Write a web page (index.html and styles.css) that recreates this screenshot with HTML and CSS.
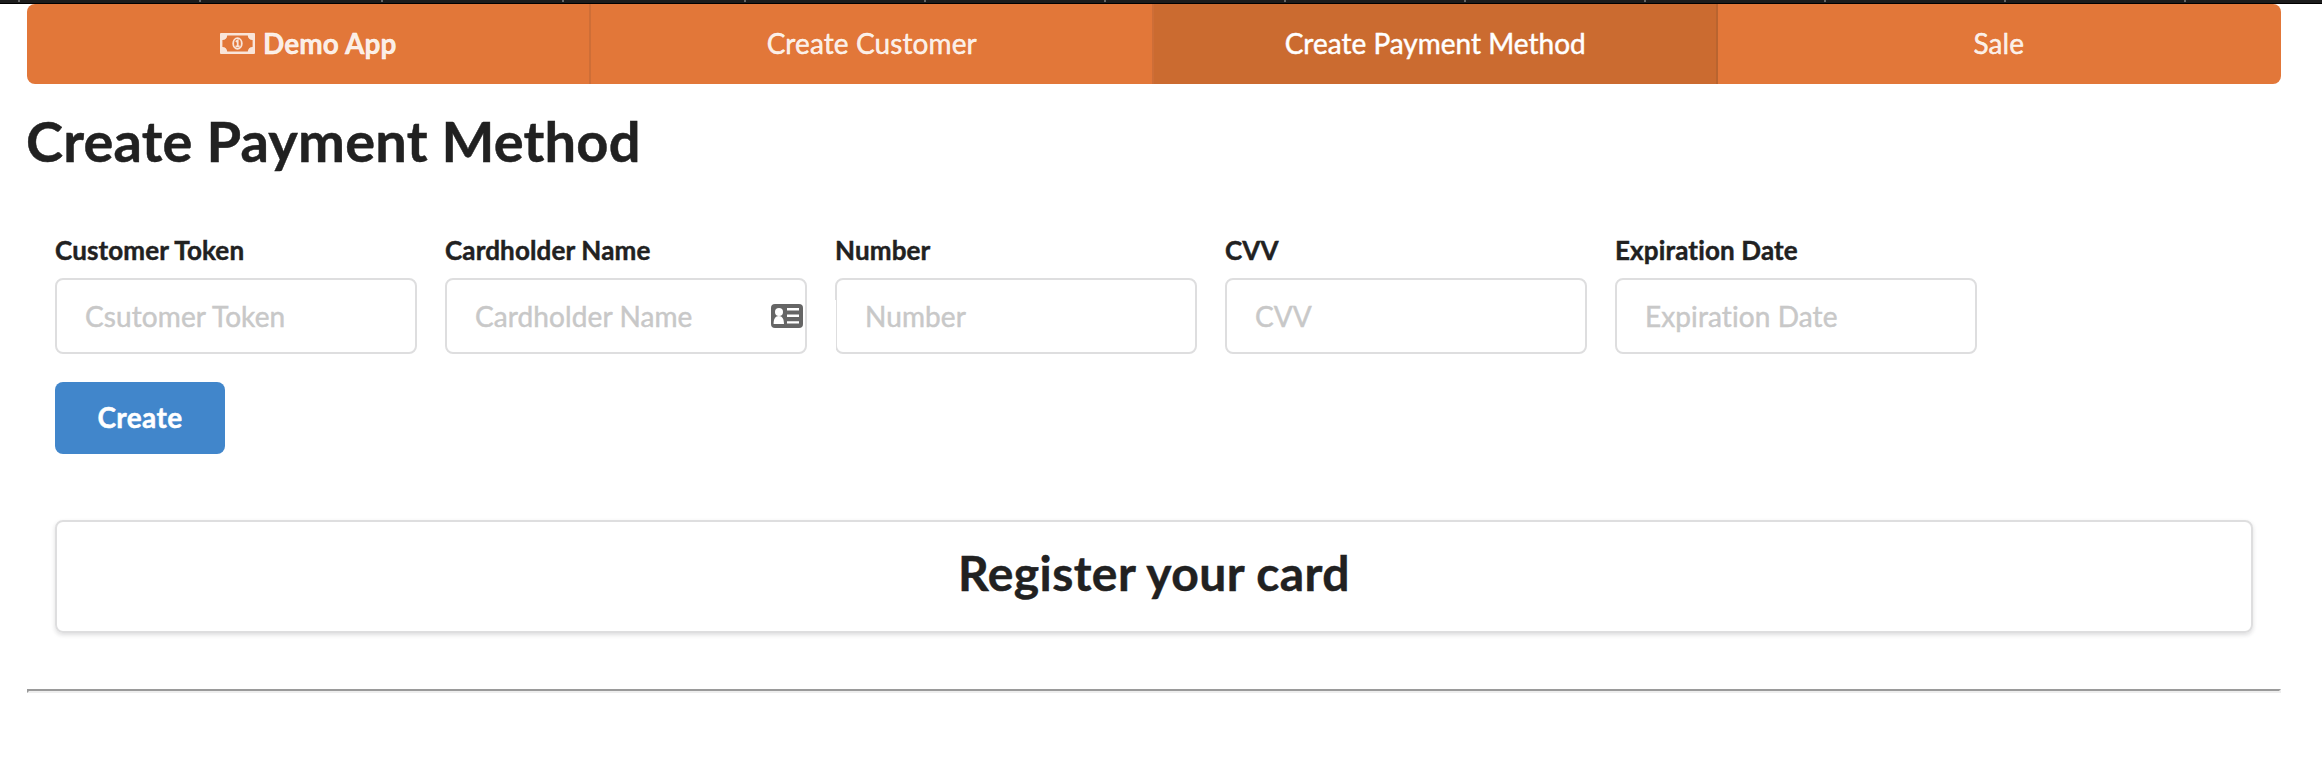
FILE: index.html
```html
<!DOCTYPE html>
<html lang="en">
<head>
<meta charset="utf-8">
<title>Demo App</title>
<link rel="stylesheet" href="styles.css">
</head>
<body>
<div class="window-edge"></div>
<div class="container">
  <nav class="menu">
    <a class="item brand">
      <svg class="money" viewBox="0 0 35 21" fill="none" stroke="currentColor">
        <path fill="currentColor" stroke="none" fill-rule="evenodd" d="M1 0h33a1 1 0 0 1 1 1v19a1 1 0 0 1-1 1H1a1 1 0 0 1-1-1V1a1 1 0 0 1 1-1zM7.200 2.400A5 5 0 0 1 2.400 7v7A5 5 0 0 1 7.200 18.600h20.600a5 5 0 0 1 4.800-4.600V7A5 5 0 0 1 27.800 2.400z"/>
        <ellipse cx="17.500" cy="10.500" rx="4.300" ry="5.300" stroke-width="1.800"/>
        <path stroke-width="1.800" d="M15.700 8.700l2-1.300v6M15.500 13.300h4.200"/>
      </svg>
      <span>Demo App</span>
    </a>
    <a class="item">Create Customer</a>
    <a class="item active">Create Payment Method</a>
    <a class="item">Sale</a>
  </nav>
  <h1 class="title">Create Payment Method</h1>
  <form class="form">
    <div class="fields">
      <div class="field"><label class="label" for="token">Customer Token</label><input class="input" id="token" placeholder="Csutomer Token"></div>
      <div class="field"><label class="label" for="holder">Cardholder Name</label><input class="input" id="holder" placeholder="Cardholder Name">
        <svg class="contact" viewBox="0 0 32 24"><rect width="32" height="24" rx="4" fill="#656565"/><g fill="#fff"><circle cx="8" cy="8" r="4"/><path d="M2.600 20c0-5 1.600-8 5.200-8s5.200 3 5.200 8zM16 4h12v2.400H16zM16 10.600h12V13H16zM16 17.200h12v2.400H16z"/></g></svg>
      </div>
      <div class="field clipped"><label class="label" for="number">Number</label><input class="input" id="number" placeholder="Number"></div>
      <div class="field"><label class="label" for="cvv">CVV</label><input class="input" id="cvv" placeholder="CVV"></div>
      <div class="field"><label class="label" for="expires">Expiration Date</label><input class="input" id="expires" placeholder="Expiration Date"></div>
    </div>
    <button class="button" type="button">Create</button>
  </form>
  <section class="segment"><h2 class="heading">Register your card</h2></section>
  <hr class="rule">
</div>
</body>
</html>
```
FILE: styles.css
```css
* { box-sizing: border-box; }
body {
  margin: 0;
  height: 772px;
  overflow: hidden;
  background: #fff;
  color: #212121;
  font: 28px/40px Lato, sans-serif;
  font-variant-ligatures: none;
  -webkit-text-stroke: .45px currentColor;
}
.window-edge {
  height: 4px;
  border-bottom: 1px solid #000;
  background:
    repeating-linear-gradient(90deg, #666 0 2px, transparent 2px 181.5px) 18px 0 / 900px 2px no-repeat,
    repeating-linear-gradient(90deg, #666 0 2px, transparent 2px 180px) 924px 0 / 1398px 2px no-repeat,
    #1c1c1c;
}
.container { width: 2254px; margin-left: 27px; }
.menu {
  display: flex;
  height: 80px;
  overflow: hidden;
  border-radius: 8px;
  background: #e27739;
}
.item {
  width: 25%;
  display: flex;
  align-items: center;
  justify-content: center;
  padding: 0 0 2px 1px;
  border-right: 2px solid rgba(34, 36, 38, .1);
  color: rgba(255, 255, 255, .9);
  letter-spacing: .1px;
}
.item:last-child { border-right-color: transparent; }
.item.active { background: #cb6b30; color: #fff; letter-spacing: 0; }
.brand { gap: 8px; font-weight: 700; }
.money { width: 35px; height: 21px; opacity: .9; }
.title {
  margin: 21px 0 0;
  font-size: 56px;
  line-height: 72px;
  font-weight: 700;
  letter-spacing: .2px;
  text-indent: -1px;
}
.form { padding: 55px 28px 0; }
.fields { display: flex; gap: 28px; }
.field { width: 362px; position: relative; }
.label {
  display: block;
  height: 46px;
  font-size: 26px;
  line-height: 36px;
  font-weight: 700;
  letter-spacing: .15px;
}
.input {
  display: block;
  width: 100%;
  height: 76px;
  padding: 0 28px;
  border: 2px solid #dededf;
  border-radius: 8px;
  background: #fff;
  font: 28px/34px Lato, sans-serif;
  font-variant-ligatures: none;
  letter-spacing: .1px;
}
.input::placeholder { color: #c8c8c8; opacity: 1; }
.contact { position: absolute; right: 4px; top: 72px; width: 32px; height: 24px; }
.clipped::after {
  content: "";
  position: absolute;
  left: 0;
  top: 68px;
  width: 1px;
  height: 54px;
  background: #fff;
}
.button {
  display: block;
  width: 170px;
  height: 72px;
  margin-top: 28px;
  padding: 0 0 2px;
  border: 0;
  border-radius: 8px;
  background: #4186cb;
  color: #fff;
  font: 700 28px/28px Lato, sans-serif;
  letter-spacing: .4px;
}
.segment {
  height: 113px;
  margin: 66px 28px 0;
  padding-top: 20px;
  border: 2px solid #dededf;
  border-radius: 8px;
  box-shadow: 0 2px 4px rgba(34, 36, 38, .15);
  text-align: center;
}
.heading {
  margin: 0;
  font-size: 48px;
  line-height: 62px;
  font-weight: 700;
  letter-spacing: .45px;
}
.rule {
  height: 4px;
  margin: 56px 0 0;
  border: 2px solid;
  border-color: #9a9a9a #eee #eee #9a9a9a;
}
```
